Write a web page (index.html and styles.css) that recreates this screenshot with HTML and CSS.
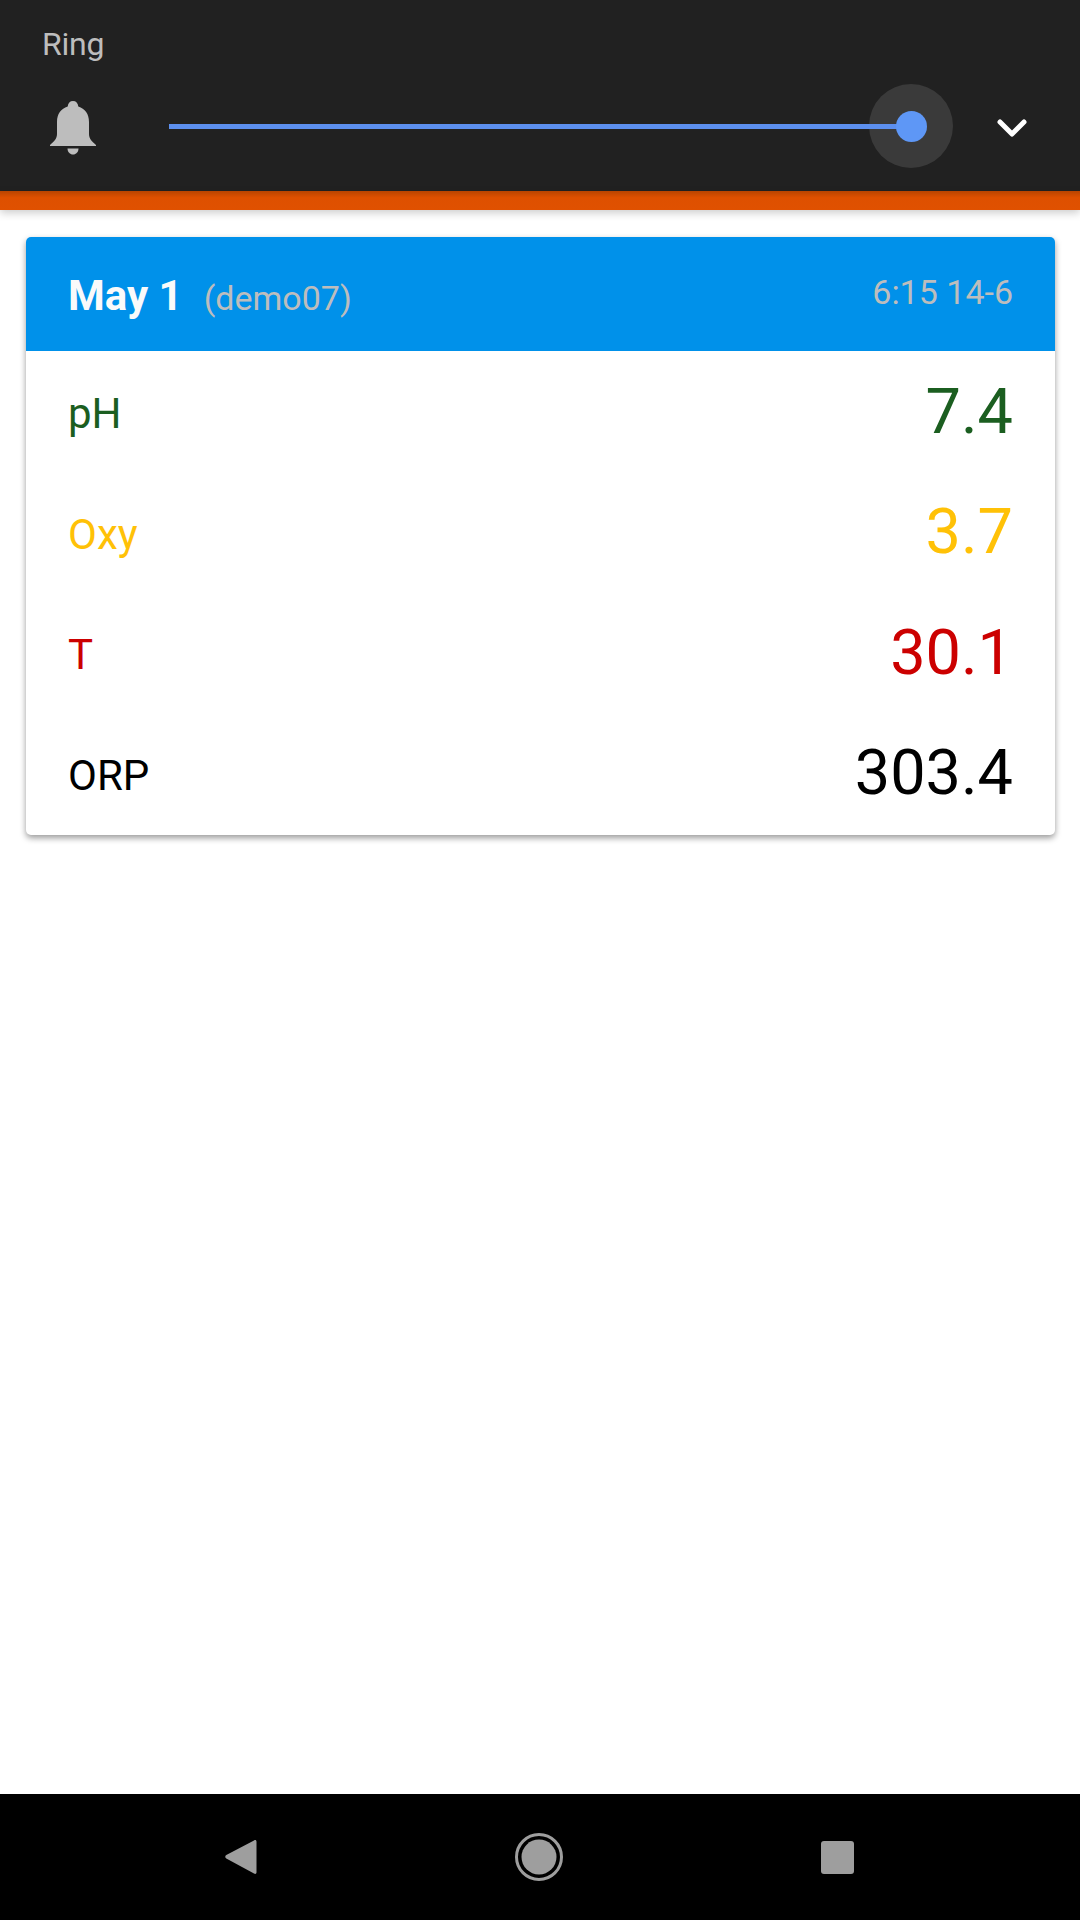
FILE: index.html
```html
<!DOCTYPE html>
<html>

<head>
    <meta charset="utf-8">
    <title>Ring</title>
    <link rel="stylesheet" href="styles.css">
</head>

<body>
    <div class="screen">
        <div class="volume">
            <div class="volume-title">Ring</div>
            <div class="volume-row">
                <svg class="bell" viewBox="0 0 46 54">
                    <path d="M23 0c3 0 5 2 5.300 5.500C35 7.500 39 13 39 21v12c0 4.500 2.500 7 7 11v1H0v-1c4.500-4 7-6.500 7-11V21C7 13 11 7.500 17.700 5.500 18 2 20 0 23 0z" />
                    <path d="M17.500 47.500h11c0 3.500-2.500 6-5.500 6s-5.500-2.500-5.500-6z" />
                </svg>
                <div class="slider">
                    <div class="slider-track"></div>
                    <div class="slider-halo"></div>
                    <div class="slider-thumb"></div>
                </div>
                <svg class="chevron" viewBox="0 0 30 18">
                    <path d="M3 3l12 12L27 3" />
                </svg>
            </div>
        </div>
        <div class="accent-bar"></div>

        <div class="content">
            <div class="card">
                <div class="card-header">
                    <div class="card-title">
                        <span class="card-date">May 1</span>
                        <span class="card-device">(demo07)</span>
                    </div>
                    <div class="card-time">6:15 14-6</div>
                </div>
                <div class="row ph">
                    <div class="label">pH</div>
                    <div class="value">7.4</div>
                </div>
                <div class="row oxy">
                    <div class="label">Oxy</div>
                    <div class="value">3.7</div>
                </div>
                <div class="row temp">
                    <div class="label">T</div>
                    <div class="value">30.1</div>
                </div>
                <div class="row orp">
                    <div class="label">ORP</div>
                    <div class="value">303.4</div>
                </div>
            </div>
        </div>

        <div class="nav-bar">
            <svg class="nav-back" viewBox="0 0 32 36">
                <path d="M29 1.500c1.300-1 2.500-.3 2.500 1.200v30.600c0 1.500-1.200 2.200-2.500 1.200L1.300 19.500c-1.400-1-1.400-2.500 0-3.500z" />
            </svg>
            <svg class="nav-home" viewBox="0 0 48 48">
                <circle cx="24" cy="24" r="22.500" class="nav-home-ring" />
                <circle cx="24" cy="24" r="17.500" />
            </svg>
            <div class="nav-recent"></div>
        </div>
    </div>
</body>

</html>
```

FILE: styles.css
```css
body {
    font-family: Roboto, "Liberation Sans", sans-serif;
    background: #fff;
    margin: 0;
    padding: 0;
}

.screen {
    width: 1080px;
    height: 1920px;
    display: flex;
    flex-direction: column;
    overflow: hidden;
}

.volume {
    height: 191px;
    box-sizing: border-box;
    padding: 24px 0 0 42px;
    background: #212121;
}

.volume-title {
    font-size: 32px;
    line-height: 40px;
    letter-spacing: -0.2px;
    color: #bdbdbd;
}

.volume-row {
    display: flex;
    align-items: center;
    height: 84px;
    margin-top: 20px;
}

.bell {
    width: 46px;
    height: 54px;
    margin-left: 8px;
    margin-top: 3px;
    fill: #bdbdbd;
}

.slider {
    position: relative;
    width: 742px;
    height: 5px;
    margin-left: 73px;
}

.slider-track {
    position: relative;
    z-index: 1;
    height: 5px;
    background: #5c8fee;
}

.slider-halo {
    position: absolute;
    left: 700px;
    top: -40px;
    width: 84px;
    height: 84px;
    border-radius: 50%;
    background: #3a3a3a;
}

.slider-thumb {
    position: absolute;
    z-index: 2;
    left: 727px;
    top: -13px;
    width: 31px;
    height: 31px;
    border-radius: 50%;
    background: #5e97f6;
}

.chevron {
    width: 30px;
    height: 18px;
    margin-left: 86px;
    margin-top: 4px;
    fill: none;
    stroke: #fff;
    stroke-width: 5px;
    stroke-linecap: round;
    stroke-linejoin: round;
}

.accent-bar {
    height: 19px;
    background: linear-gradient(#b84400, #de5000 35%, #e05100);
    box-shadow: 0 3px 8px rgba(0, 0, 0, 0.2);
}

.content {
    flex: 1;
    padding: 27px 25px 0 26px;
}

.card {
    background: #fff;
    border-radius: 5px;
    overflow: hidden;
    padding-bottom: 2px;
    box-shadow: 0 3px 6px rgba(0, 0, 0, 0.4);
}

.card-header {
    display: flex;
    justify-content: space-between;
    height: 114px;
    box-sizing: border-box;
    padding: 34px 42px 0 42px;
    background: #0091ea;
}

.card-title {
    display: flex;
    align-items: baseline;
    line-height: 50px;
}

.card-date {
    font-size: 42px;
    font-weight: 700;
    color: #fafafa;
}

.card-device {
    font-size: 34px;
    margin-left: 21px;
    color: #bdbdbd;
}

.card-time {
    font-size: 34px;
    line-height: 40px;
    padding-top: 1px;
    color: #bdbdbd;
}

.row {
    display: flex;
    justify-content: space-between;
    align-items: center;
    height: 120.5px;
    padding: 0 42px;
}

.label {
    font-size: 42px;
    padding-top: 5px;
}

.value {
    font-size: 63px;
}

.ph {
    color: #1b5e20;
}

.oxy {
    color: #ffc107;
}

.temp {
    color: #cc0000;
}

.orp {
    color: #000;
}

.nav-bar {
    height: 126px;
    background: #000;
    display: flex;
    align-items: center;
}

.nav-back {
    width: 32px;
    height: 36px;
    margin-left: 225px;
    fill: #9e9e9e;
}

.nav-home {
    width: 48px;
    height: 48px;
    margin-left: 258px;
    fill: #9e9e9e;
}

.nav-home-ring {
    fill: none;
    stroke: #9e9e9e;
    stroke-width: 3px;
}

.nav-recent {
    width: 33px;
    height: 33px;
    margin-left: 258px;
    border-radius: 3px;
    background: #9e9e9e;
}
```
